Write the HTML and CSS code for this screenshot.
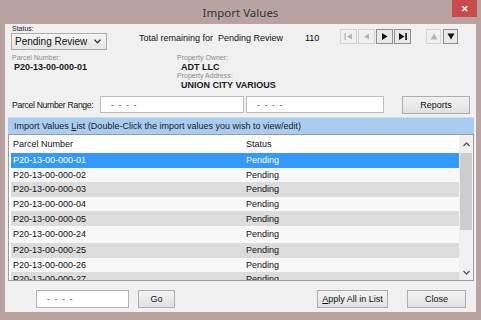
FILE: index.html
```html
<!DOCTYPE html>
<html lang="en">
<head>
<meta charset="UTF-8">
<title>Import Values</title>
<link rel="stylesheet" href="styles.css">
</head>
<body>

<div class="window">
  <div class="titlebar">
    <span class="title">Import Values</span>
    <div class="close">&#x2715;</div>
  </div>

  <div class="client">
    <div class="toprow">
      <div class="status">
        <div class="tiny">Status:</div>
        <div class="select">
          <span>Pending Review</span>
          <svg width="7" height="5" viewBox="0 0 7 5"><polyline points="0.5,0.8 3.5,3.8 6.5,0.8" fill="none" stroke="#333" stroke-width="1.3"/></svg>
        </div>
      </div>
      <div class="total">Total remaining for&nbsp; Pending Review</div>
      <div class="count">110</div>
      <div class="nav">
        <div class="navbtn off"><svg width="9" height="7" viewBox="0 0 9 7"><rect x="0.5" y="0" width="1.3" height="7" fill="#b5b5b5"/><polygon points="8,0.5 3,3.5 8,6.5" fill="#b5b5b5"/></svg></div>
        <div class="navbtn off"><svg width="9" height="7" viewBox="0 0 9 7"><polygon points="7,0.5 2,3.5 7,6.5" fill="#b5b5b5"/></svg></div>
        <div class="navbtn"><svg width="9" height="7" viewBox="0 0 9 7"><polygon points="2,0 7.5,3.5 2,7" fill="#111"/></svg></div>
        <div class="navbtn"><svg width="10" height="7" viewBox="0 0 10 7"><polygon points="1,0 6.5,3.5 1,7" fill="#111"/><rect x="7.3" y="0" width="1.6" height="7" fill="#111"/></svg></div>
      </div>
      <div class="nav updown">
        <div class="navbtn small off"><svg width="8" height="7" viewBox="0 0 8 7"><polygon points="0.5,6.5 4,0.5 7.5,6.5" fill="#b5b5b5"/></svg></div>
        <div class="navbtn small"><svg width="8" height="7" viewBox="0 0 8 7"><polygon points="0.5,0.5 7.5,0.5 4,6.5" fill="#111"/></svg></div>
      </div>
    </div>

    <div class="info">
      <div class="col">
        <div class="tiny grey">Parcel Number:</div>
        <div class="value">P20-13-00-000-01</div>
      </div>
      <div class="col owner">
        <div class="tiny grey">Property Owner:</div>
        <div class="value">ADT LLC</div>
        <div class="tiny grey">Property Address:</div>
        <div class="value">UNION CITY VARIOUS</div>
      </div>
    </div>

    <div class="range">
      <span class="range-label">Parcel Number Range:</span>
      <div class="field wide">- - - -</div>
      <div class="field mid">- - - -</div>
      <button class="btn reports">Reports</button>
    </div>

    <div class="listpanel">
      <div class="listhead"><span>Import Values <u>L</u>ist (Double-Click the import values you wish to view/edit)</span></div>
      <div class="listbox">
        <div class="rows">
          <div class="row head"><span class="c1">Parcel Number</span><span>Status</span></div>
          <div class="row sel"><span class="c1">P20-13-00-000-01</span><span>Pending</span></div>
          <div class="row"><span class="c1">P20-13-00-000-02</span><span>Pending</span></div>
          <div class="row alt"><span class="c1">P20-13-00-000-03</span><span>Pending</span></div>
          <div class="row"><span class="c1">P20-13-00-000-04</span><span>Pending</span></div>
          <div class="row alt"><span class="c1">P20-13-00-000-05</span><span>Pending</span></div>
          <div class="row tall"><span class="c1">P20-13-00-000-24</span><span>Pending</span></div>
          <div class="row alt"><span class="c1">P20-13-00-000-25</span><span>Pending</span></div>
          <div class="row"><span class="c1">P20-13-00-000-26</span><span>Pending</span></div>
          <div class="row alt"><span class="c1">P20-13-00-000-27</span><span>Pending</span></div>
        </div>
        <div class="scrollbar">
          <div class="arrow"><svg width="7" height="5" viewBox="0 0 7 5"><polyline points="0.5,4 3.5,1 6.5,4" fill="none" stroke="#555" stroke-width="1.3"/></svg></div>
          <div class="thumb"></div>
          <div class="track"></div>
          <div class="arrow"><svg width="7" height="5" viewBox="0 0 7 5"><polyline points="0.5,1 3.5,4 6.5,1" fill="none" stroke="#555" stroke-width="1.3"/></svg></div>
        </div>
      </div>
    </div>

    <div class="bottom">
      <div class="field goto">- - - -</div>
      <button class="btn go">Go</button>
      <button class="btn apply"><u>A</u>pply All in List</button>
      <button class="btn close-btn">Close</button>
    </div>
  </div>
</div>

</body>
</html>
```

FILE: styles.css
```css
body {
  margin: 0;
  background: #b9a3a1;
  font-family: "Liberation Sans", Arial, sans-serif;
  font-size: 9px;
  color: #111;
}
.window {
  width: 481px;
  height: 320px;
  display: flex;
  flex-direction: column;
}
.titlebar {
  height: 24px;
  position: relative;
  display: flex;
  justify-content: center;
  align-items: center;
}
.title {
  font-family: "Noto Sans", sans-serif;
  font-size: 11.5px;
  color: #333;
  margin-top: 1px;
}
.close {
  position: absolute;
  left: 452px;
  top: 0;
  width: 25px;
  height: 17px;
  background: #c94b4b;
  color: #fff;
  font-size: 9px;
  font-weight: bold;
  display: flex;
  justify-content: center;
  align-items: center;
}
.client {
  margin: 0 5px;
  height: 288px;
  background: #f0f0f0;
  display: flex;
  flex-direction: column;
}
.tiny {
  font-size: 7px;
  line-height: 8px;
}
.grey {
  color: #8c8c8c;
}

/* top row */
.toprow {
  height: 26px;
  display: flex;
  align-items: flex-start;
}
.status {
  margin-left: 6px;
  padding-top: 1px;
}
.status .tiny {
  margin-left: 1px;
  color: #222;
}
.select {
  height: 15px;
  border: 1px solid #acacac;
  background: linear-gradient(#f6f6f6, #e4e4e4);
  display: flex;
  align-items: center;
  justify-content: space-between;
  padding: 0 5px 0 3px;
  width: 86px;
  font-size: 10px;
}
.total {
  margin-left: 32px;
  margin-top: 9px;
  width: 166px;
}
.count {
  margin-top: 9px;
}
.nav {
  display: flex;
  gap: 1px;
  margin-left: 21px;
  margin-top: 5px;
}
.navbtn {
  width: 15px;
  height: 13px;
  border: 1px solid #8f8f8f;
  background: #e8e8e8;
  display: flex;
  justify-content: center;
  align-items: center;
}
.navbtn.off {
  border-color: #d4d4d4;
  background: #f0f0f0;
}
.updown {
  margin-left: 15px;
  gap: 2px;
}
.navbtn.small {
  width: 13px;
}

/* info */
.info {
  height: 45px;
  display: flex;
  padding-top: 4px;
  box-sizing: border-box;
}
.col {
  margin-left: 7px;
}
.owner {
  margin-left: 90px;
}
.value {
  font-weight: bold;
  font-size: 9px;
  line-height: 10px;
  margin-left: 2px;
  color: #1a1a1a;
}
.owner .value {
  margin-left: 4px;
}

/* range row */
.range {
  height: 19px;
  display: flex;
  align-items: center;
}
.range-label {
  margin-left: 7px;
  width: 88px;
  white-space: nowrap;
  font-size: 8.6px;
  letter-spacing: -0.3px;
}
.field {
  height: 17px;
  border: 1px solid #bdbdbd;
  background: #fff;
  color: #555;
  box-sizing: border-box;
  display: flex;
  align-items: center;
  padding-left: 10px;
  letter-spacing: 1px;
}
.wide {
  width: 144px;
}
.mid {
  width: 138px;
  margin-left: 2px;
}
.btn {
  font-family: inherit;
  font-size: 9px;
  color: #111;
  height: 18px;
  border: 1px solid #adadad;
  background: linear-gradient(#f2f2f2, #e1e1e1);
  padding: 0;
}
.reports {
  width: 68px;
  margin-left: 18px;
}

/* list */
.listpanel {
  margin: 3px 2px 0 3px;
  height: 164px;
  display: flex;
  flex-direction: column;
}
.listhead {
  height: 17px;
  background: #a9cdf1;
  border-top: 1px solid #c9ddef;
  box-sizing: border-box;
  padding-left: 6px;
  display: flex;
  align-items: center;
  color: #1a1a1a;
}
.listbox {
  flex: 1;
  border: 1px solid #9c9c9c;
  background: #fff;
  display: flex;
  overflow: hidden;
}
.rows {
  flex: 1;
  padding-left: 2px;
  overflow: hidden;
}
.row {
  height: 14.6px;
  display: flex;
  align-items: center;
  padding-left: 2px;
  background: #f8f8f8;
}
.row.head {
  height: 18px;
  background: #fff;
}
.row.alt {
  background: #dcdcdc;
}
.row.sel {
  background: #3399fe;
  color: #fff;
}
.row.tall {
  height: 17px;
}
.c1 {
  width: 233px;
}
.scrollbar {
  width: 14px;
  background: #f0f0f0;
  display: flex;
  flex-direction: column;
}
.arrow {
  height: 18px;
  display: flex;
  justify-content: center;
  align-items: center;
}
.arrow:last-child {
  height: 16px;
}
.thumb {
  height: 77px;
  margin: 0 1px;
  background: #cdcdcd;
}
.track {
  flex: 1;
}

/* bottom */
.bottom {
  display: flex;
  align-items: center;
  margin-top: 9px;
}
.goto {
  width: 93px;
  height: 18px;
  margin-left: 31px;
  border-color: #b3b3b3;
}
.go {
  width: 37px;
  margin-left: 9px;
}
.apply {
  width: 71px;
  margin-left: 142px;
}
.close-btn {
  width: 59px;
  margin-left: 19px;
}
```
